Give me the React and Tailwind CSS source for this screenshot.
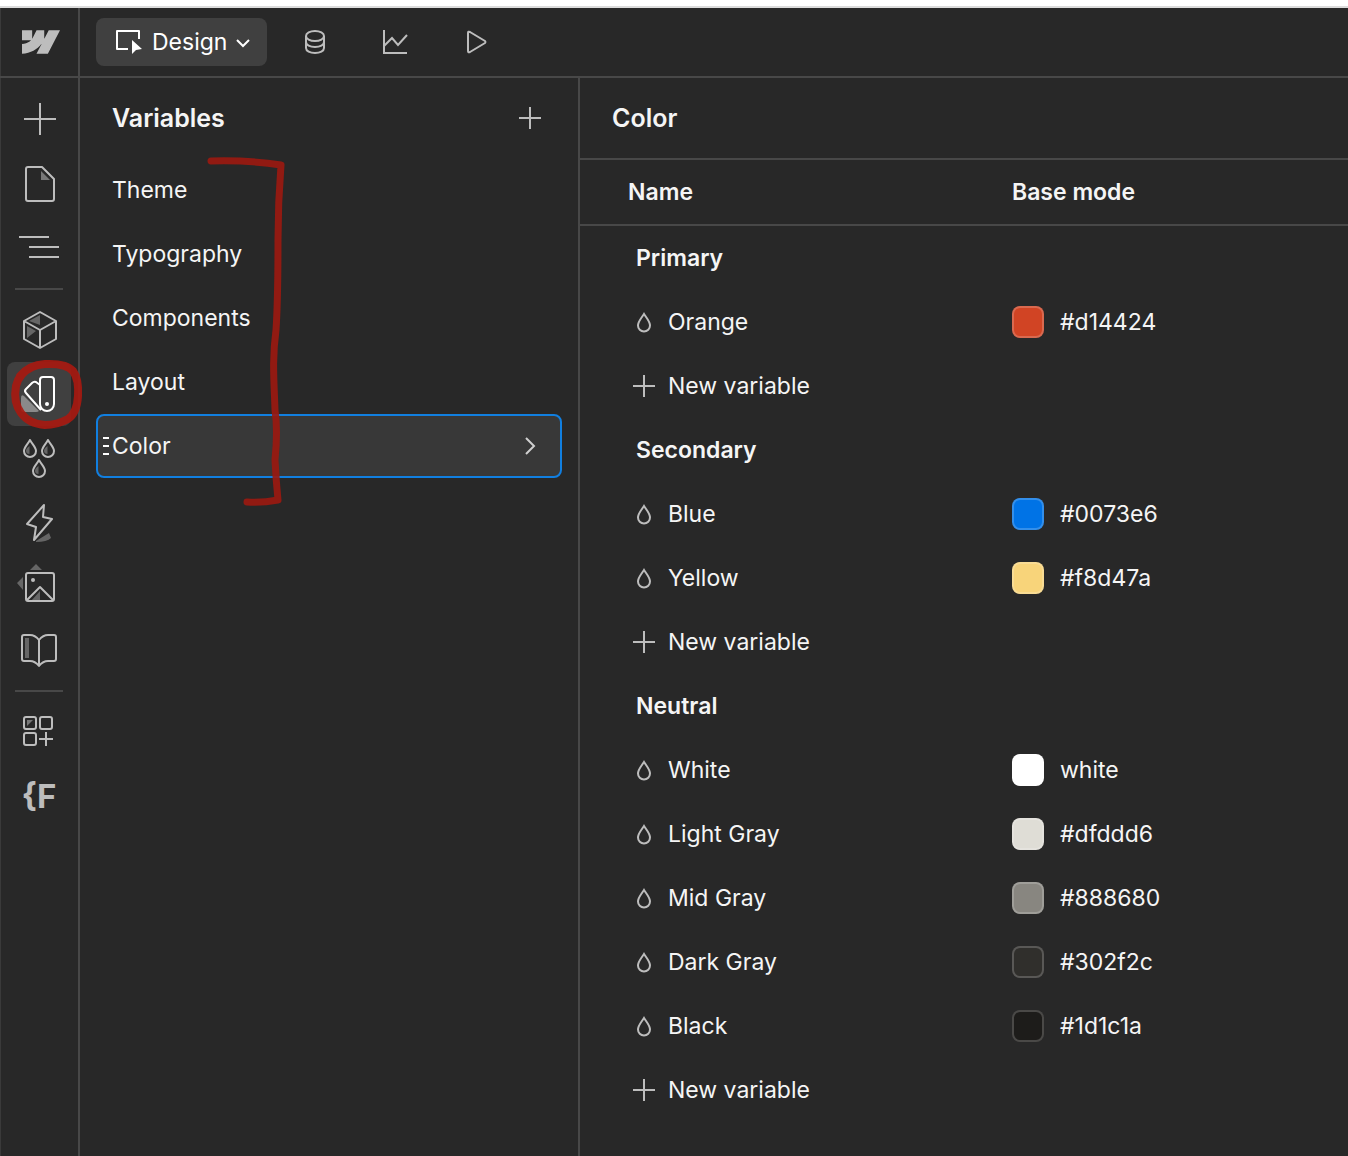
import clsx from 'clsx'

const collections = ['Theme', 'Typography', 'Components', 'Layout', 'Color']

const groups = [
  {
    name: 'Primary',
    variables: [{ name: 'Orange', value: '#d14424', swatch: 'bg-[#d14424]' }],
  },
  {
    name: 'Secondary',
    variables: [
      { name: 'Blue', value: '#0073e6', swatch: 'bg-[#0073e6]' },
      { name: 'Yellow', value: '#f8d47a', swatch: 'bg-[#f8d47a]' },
    ],
  },
  {
    name: 'Neutral',
    variables: [
      { name: 'White', value: 'white', swatch: 'bg-white' },
      { name: 'Light Gray', value: '#dfddd6', swatch: 'bg-[#dfddd6]' },
      { name: 'Mid Gray', value: '#888680', swatch: 'bg-[#888680]' },
      { name: 'Dark Gray', value: '#302f2c', swatch: 'bg-[#302f2c]' },
      { name: 'Black', value: '#1d1c1a', swatch: 'bg-[#1d1c1a]' },
    ],
  },
]

function PlusIcon() {
  return (
    <svg className="size-6" viewBox="0 0 24 24" fill="none" stroke="#bdbdbd" strokeWidth="2" aria-hidden="true">
      <path d="M12 1v22M1 12h22" />
    </svg>
  )
}

function DropIcon() {
  return (
    <svg className="size-6" viewBox="0 0 24 24" fill="none" stroke="#bdbdbd" strokeWidth="2" aria-hidden="true">
      <path d="M12 4C9.500 8 6 11.500 6 15.500a6 6 0 0 0 12 0C18 11.500 14.500 8 12 4Z" />
    </svg>
  )
}

function RailButton({ label, active, children }) {
  return (
    <button
      type="button"
      aria-label={label}
      className={clsx('size-16 shrink-0 rounded-lg', active ? 'bg-[#404040] text-white' : 'text-[#bdbdbd]')}
    >
      <svg className="size-16" viewBox="0 0 64 64" fill="none" stroke="currentColor" strokeWidth="2" strokeLinejoin="round">
        {children}
      </svg>
    </button>
  )
}

function SmallDrop({ x, y }) {
  return (
    <g transform={`translate(${x} ${y})`}>
      <path d="M0-8C-2-4-6-1-6 3a6 6 0 0 0 12 0C6-1 2-4 0-8Z" />
      <path d="M-.5-2v8A3.500 3.500 0 0 1-4 2.500C-4 1-2-1-.5-2Z" fill="#666" stroke="none" />
    </g>
  )
}

function Rail() {
  return (
    <nav aria-label="Tools" className="flex w-20 shrink-0 flex-col border-r-2 border-[#484848] pt-[10px] pl-[7px]">
      <RailButton label="Add">
        <path d="M33 15v32M17 31h32" />
      </RailButton>
      <RailButton label="Pages">
        <path d="M21 15h14l12 12v20a2 2 0 0 1-2 2H21a2 2 0 0 1-2-2V17a2 2 0 0 1 2-2Z" />
        <path d="M34 19v9h9Z" fill="#777" stroke="none" />
      </RailButton>
      <RailButton label="Navigator">
        <path d="M12 21h30M22 31h30M22 41h30" />
      </RailButton>
      <hr className="my-2 ml-2 w-12 border-t-2 border-[#484848]" />
      <RailButton label="Components">
        <path d="M33 17v10L22 23ZM20 28v12l9-7Z" fill="#666" stroke="none" />
        <path d="M33 14l16 9v18l-16 9-16-9V23ZM17 23l16 9 16-9M33 32v18" />
      </RailButton>
      <RailButton label="Variables" active>
        <path d="M14 36q0-4 3-2l15 15q-1 1-3 1H17q-3 0-3-3Z" fill="#8a8a8a" stroke="none" />
        <path d="M33 23l-4-3q-2-1-4 1l-6 6q-2 2 0 4l15 17" />
        <path d="M36 15h8a3 3 0 0 1 3 3v24a7 7 0 0 1-14 0V18a3 3 0 0 1 3-3Z" />
        <circle cx="40" cy="42" r="2" fill="currentColor" stroke="none" />
      </RailButton>
      <RailButton label="Style selectors">
        <SmallDrop x={23} y={22} />
        <SmallDrop x={41} y={22} />
        <SmallDrop x={32} y={42} />
      </RailButton>
      <RailButton label="Interactions">
        <path d="M29 51l13-8 2 5q-4 4-15 4Z" fill="#666" stroke="none" />
        <path d="M37 15l-1 12 9 2-18 21 2-13-9-3Z" />
      </RailButton>
      <RailButton label="Assets">
        <path d="M23 16l6-6 6 6ZM16 23l-6 6 6 7ZM24 47l9-10v10Z" fill="#666" stroke="none" />
        <rect x="19" y="19" width="28" height="28" rx="2" />
        <path d="M20 46l13-13 13 13" />
        <circle cx="26" cy="26" r="2" fill="currentColor" stroke="none" />
      </RailButton>
      <RailButton label="Libraries">
        <path d="M18 20h4v20h-4Z" fill="#666" stroke="none" />
        <path d="M32 22q-4-5-9-5h-6q-2 0-2 2v22q0 2 2 2h6q5 0 9 5 4-5 9-5h6q2 0 2-2V19q0-2-2-2h-6q-5 0-9 5ZM32 22v25" />
      </RailButton>
      <hr className="my-2 ml-2 w-12 border-t-2 border-[#484848]" />
      <RailButton label="Apps">
        <rect x="17" y="17" width="12" height="12" rx="2" />
        <rect x="33" y="17" width="12" height="12" rx="2" />
        <rect x="17" y="33" width="12" height="12" rx="2" />
        <path d="M39 32v14M32 39h14" />
        <path d="M20 20h6l-6 6Z" fill="#777" stroke="none" />
      </RailButton>
      <button type="button" className="size-16 shrink-0 text-[33px] leading-none font-bold text-[#bdbdbd]">
        {'{F'}
      </button>
    </nav>
  )
}

function TopBar() {
  return (
    <header className="flex h-[70px] shrink-0 items-stretch border-b-2 border-[#484848]">
      <a href="#" aria-label="Home" className="flex w-20 shrink-0 items-center border-r-2 border-[#484848] pl-[22px]">
        <svg className="h-6 w-[38px]" viewBox="0 4.500 24 15" fill="#bdbdbd">
          <path d="m24 4.515-7.658 14.970H9.149l3.205-6.204h-.144C9.566 16.713 5.621 18.973 0 19.485v-6.118s3.596-.213 5.710-2.435H0V4.515h6.417v5.278l.144-.001 2.622-5.277h4.854v5.244h.144l2.720-5.244H24Z" />
        </svg>
      </a>
      <div className="flex items-center gap-8 pl-4 text-[#bdbdbd]">
        <button type="button" className="-mr-2 flex h-12 items-center gap-2 rounded-lg bg-[#404040] pr-4 pl-5 text-white">
          <svg className="h-7 w-7" viewBox="0 0 28 28" fill="none" stroke="currentColor" strokeWidth="2" strokeLinejoin="round">
            <path d="M23 11V3H1v18h11" />
            <path d="M16 12v14l4-4 6-1Z" fill="currentColor" stroke="none" />
          </svg>
          Design
          <svg className="size-4" viewBox="0 0 16 16" fill="none" stroke="currentColor" strokeWidth="2">
            <path d="M2 6l6 6 6-6" />
          </svg>
        </button>
        <button type="button" aria-label="CMS">
          <svg className="size-12" viewBox="0 0 48 48" fill="none" stroke="currentColor" strokeWidth="2">
            <ellipse cx="24" cy="18" rx="9" ry="5" />
            <path d="M15 18v12c0 3 4 5 9 5s9-2 9-5V18M15 24c0 3 4 5 9 5s9-2 9-5" />
          </svg>
        </button>
        <button type="button" aria-label="Insights">
          <svg className="size-12" viewBox="0 0 48 48" fill="none" stroke="currentColor" strokeWidth="2">
            <path d="M13 12v23h23M13 28l8-8 6 7 9-10" />
          </svg>
        </button>
        <button type="button" aria-label="Preview">
          <svg className="size-12" viewBox="0 0 48 48" fill="none" stroke="currentColor" strokeWidth="2" strokeLinejoin="round">
            <path d="M17 15v18q0 2 2 1l15-9q1-1 0-2l-15-9q-2-1-2 1Z" />
          </svg>
        </button>
      </div>
    </header>
  )
}

function CollectionsPanel() {
  return (
    <section className="w-[500px] shrink-0 border-r-2 border-[#484848] px-4">
      <div className="flex h-20 items-center justify-between pr-5 pl-4">
        <h1 className="text-[25px] font-semibold">Variables</h1>
        <button type="button" aria-label="New collection">
          <PlusIcon />
        </button>
      </div>
      <ul>
        {collections.map((name) => {
          const selected = name === 'Color'
          return (
            <li key={name}>
              <button
                type="button"
                className={clsx(
                  'relative flex h-16 w-full items-center justify-between rounded-lg border-2 pr-5 pl-[14px]',
                  selected ? 'border-[#117fe0] bg-[#383838]' : 'border-transparent'
                )}
              >
                {selected && (
                  <span className="absolute left-[5px] flex flex-col gap-[6px]">
                    <span className="h-[2px] w-[6px] bg-white" />
                    <span className="h-[2px] w-[6px] bg-white" />
                    <span className="h-[2px] w-[6px] bg-white" />
                  </span>
                )}
                {name}
                {selected && (
                  <svg className="size-5" viewBox="0 0 20 20" fill="none" stroke="#d0d0d0" strokeWidth="2">
                    <path d="M6 2l8 8-8 8" />
                  </svg>
                )}
              </button>
            </li>
          )
        })}
      </ul>
    </section>
  )
}

function VariablesTable() {
  return (
    <section className="min-w-0 flex-1">
      <h2 className="flex h-[82px] items-center border-b-2 border-[#484848] pl-8 text-[25px] font-semibold">Color</h2>
      <table className="w-full table-fixed border-separate border-spacing-0 text-left">
        <thead>
          <tr className="h-[66px]">
            <th scope="col" className="w-[432px] border-b-2 border-[#484848] pl-12 font-semibold">
              Name
            </th>
            <th scope="col" className="border-b-2 border-[#484848] font-semibold">
              Base mode
            </th>
          </tr>
        </thead>
        {groups.map((group) => (
          <tbody key={group.name}>
            <tr className="h-16">
              <th scope="rowgroup" colSpan={2} className="pl-14 font-semibold">
                {group.name}
              </th>
            </tr>
            {group.variables.map((variable) => (
              <tr key={variable.name} className="h-16">
                <td className="pl-[52px]">
                  <div className="flex items-center gap-3">
                    <DropIcon />
                    {variable.name}
                  </div>
                </td>
                <td>
                  <div className="flex items-center gap-4">
                    <span className={clsx('size-8 rounded-lg border-2 border-white/20', variable.swatch)} />
                    {variable.value}
                  </div>
                </td>
              </tr>
            ))}
            <tr className="h-16">
              <td colSpan={2} className="pl-[52px]">
                <button type="button" className="flex items-center gap-3">
                  <PlusIcon />
                  New variable
                </button>
              </td>
            </tr>
          </tbody>
        ))}
      </table>
    </section>
  )
}

// Hand-drawn marker strokes laid over the panels
function Annotations() {
  return (
    <svg
      className="pointer-events-none absolute top-0 left-0 h-[520px] w-[300px]"
      viewBox="0 0 300 520"
      fill="none"
      stroke="#9c1810"
      strokeOpacity=".9"
      strokeWidth="7"
      strokeLinecap="round"
      strokeLinejoin="round"
      aria-hidden="true"
    >
      <path d="M211 161Q250 160 281 165C279 190 278 215 278 240Q278 300 276 330C272 360 274 380 275 410Q278 430 275 460Q276 480 278 500Q262 503 247 502" />
      <path
        d="M20 376Q29 365 45 364Q66 363 73 371Q79 379 78 396Q77 413 68 419Q57 425 45 425Q29 424 21 413Q13 402 16 386Q19 373 32 367"
        stroke="#a8180f"
        strokeWidth="8"
      />
    </svg>
  )
}

function App() {
  return (
    <div className="relative flex min-h-screen flex-col bg-[#282828] font-['Inter',sans-serif] text-[23px] leading-8 text-[#f5f5f5] shadow-[inset_1px_0_0_#3a3a3a]">
      <div className="h-2 shrink-0 border-b-2 border-[#dcdcdc] bg-white" />
      <TopBar />
      <main className="flex flex-1">
        <Rail />
        <CollectionsPanel />
        <VariablesTable />
      </main>
      <Annotations />
    </div>
  )
}

export default App
